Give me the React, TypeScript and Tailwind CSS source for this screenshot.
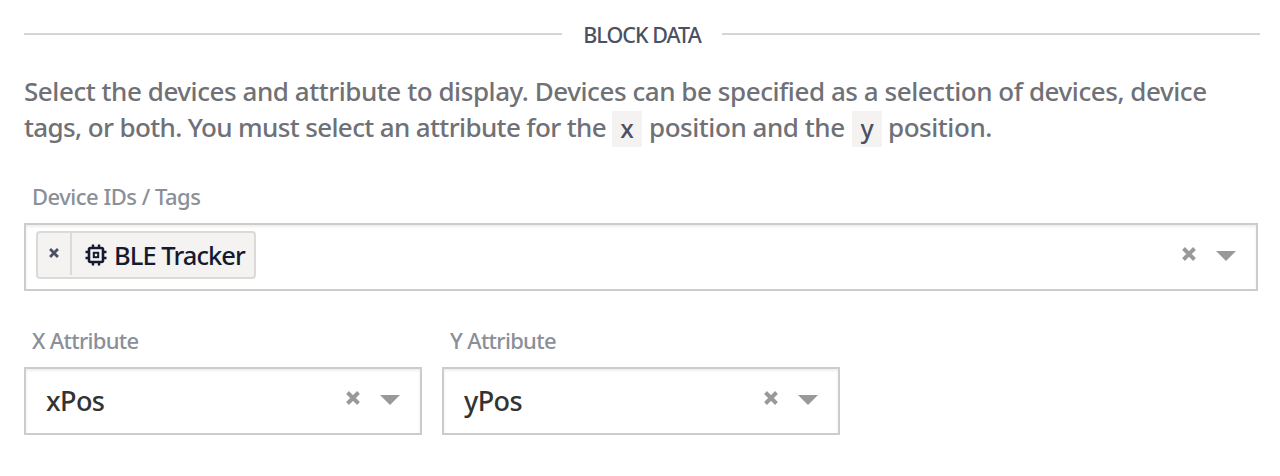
import React from "react";

function ClearIcon({ className }: { className: string }) {
  return (
    <svg viewBox="0 0 14 14" className={className} fill="none" stroke="currentColor" strokeWidth="3.9" aria-hidden="true">
      <path d="M1.5 1.5 12.5 12.5M12.5 1.5 1.5 12.5" />
    </svg>
  );
}

function ChipIcon() {
  return (
    <svg viewBox="0 0 22 22" className="h-[22px] w-[22px]" fill="none" stroke="currentColor" aria-hidden="true">
      <rect x="4" y="4" width="14" height="14" rx="1.5" strokeWidth="2.6" />
      <rect x="8.8" y="8.8" width="4.4" height="4.4" strokeWidth="2" />
      <path strokeWidth="2.4" d="M8 .5V4M14 .5V4M8 18v3.5M14 18v3.5M.5 8H4M.5 14H4M18 8h3.5M18 14h3.5" />
    </svg>
  );
}

function Controls() {
  return (
    <div className="flex items-start text-[#999]">
      <ClearIcon className="mt-[22px] h-[14px] w-[14px]" />
      <svg viewBox="0 0 20 10" className="mt-[26px] mr-[20px] ml-[20px] h-[10px] w-[20px]" fill="currentColor" aria-hidden="true">
        <path d="M0 0h20L10 10z" />
      </svg>
    </div>
  );
}

const box = "flex h-[68px] justify-between border-2 border-[#ccc] bg-white shadow-[inset_0_2px_3px_rgba(0,0,0,0.07)]";

function Attribute({ label, value }: { label: string; value: string }) {
  return (
    <div className="w-[398px]">
      <div className="h-[42px] pl-[8px] text-[22px] leading-[30px] font-medium tracking-[-0.7px] text-[#8a8f98]">{label}</div>
      <div className={box}>
        <span className="pl-[20px] text-[27px] leading-[64px] font-medium tracking-[-0.6px] text-[#333]">{value}</span>
        <Controls />
      </div>
    </div>
  );
}

function Code({ children }: { children: string }) {
  return (
    <code className="mt-px flex h-[36px] w-[30px] items-center justify-center bg-[#f4f3f2] pb-[2px] font-['Noto_Sans',sans-serif] text-[25px] font-medium text-[#4b5063]">
      {children}
    </code>
  );
}

export default function App() {
  return (
    <main className="h-[476px] w-[1280px] overflow-hidden bg-white pl-[24px] font-['Noto_Sans',sans-serif] whitespace-nowrap">
      <div className="flex h-[73px] w-[1236px] items-center pb-[5px]">
        <div className="h-[2px] w-[538px] bg-[#d5d5d5]" />
        <h2 className="w-[160px] pt-[3px] text-center text-[21.5px] font-medium tracking-[-0.98px] text-[#4b5063]">BLOCK DATA</h2>
        <div className="h-[2px] flex-1 bg-[#d5d5d5]" />
      </div>
      <div className="text-[26px] leading-[36px] font-medium text-[#6f7176]">
        <div className="tracking-[-0.445px]">
          <span>Select the devices and attribute to display. Devices can be specified as a selection of devices, device</span>
        </div>
        <div className="flex pt-px">
          <span className="-mt-px w-[588px] tracking-[-0.63px]">tags, or both. You must select an attribute for the</span>
          <Code>x</Code>
          <span className="-mt-px w-[210px] pl-[7px] tracking-[-0.45px]">position and the</span>
          <Code>y</Code>
          <span className="-mt-px pl-[6px] tracking-[-0.45px]">position.</span>
        </div>
      </div>
      <div className="mt-[34px] h-[42px] pl-[8px] text-[22px] leading-[30px] font-medium tracking-[-0.5px] text-[#8a8f98]">Device IDs / Tags</div>
      <div className={box + " w-[1234px]"}>
        <div className="mt-[6px] ml-[10px] flex h-[48px] w-[220px] rounded-[4px] border-2 border-[#dcdad8] bg-[#f4f3f2]">
          <div className="h-[42px] w-[34px] border-r-2 border-[#dcdad8] pt-[15px] pl-[11px] text-[#4b5063]">
            <ClearIcon className="h-[10px] w-[10px]" />
          </div>
          <div className="flex pl-[13px] text-[#151a30]">
            <div className="pt-[11px]"><ChipIcon /></div>
            <span className="ml-[7px] text-[25.5px] leading-[45px] font-medium tracking-[-0.95px]">BLE Tracker</span>
          </div>
        </div>
        <Controls />
      </div>
      <div className="mt-[34px] flex gap-[20px]">
        <Attribute label="X Attribute" value="xPos" />
        <Attribute label="Y Attribute" value="yPos" />
      </div>
    </main>
  );
}
